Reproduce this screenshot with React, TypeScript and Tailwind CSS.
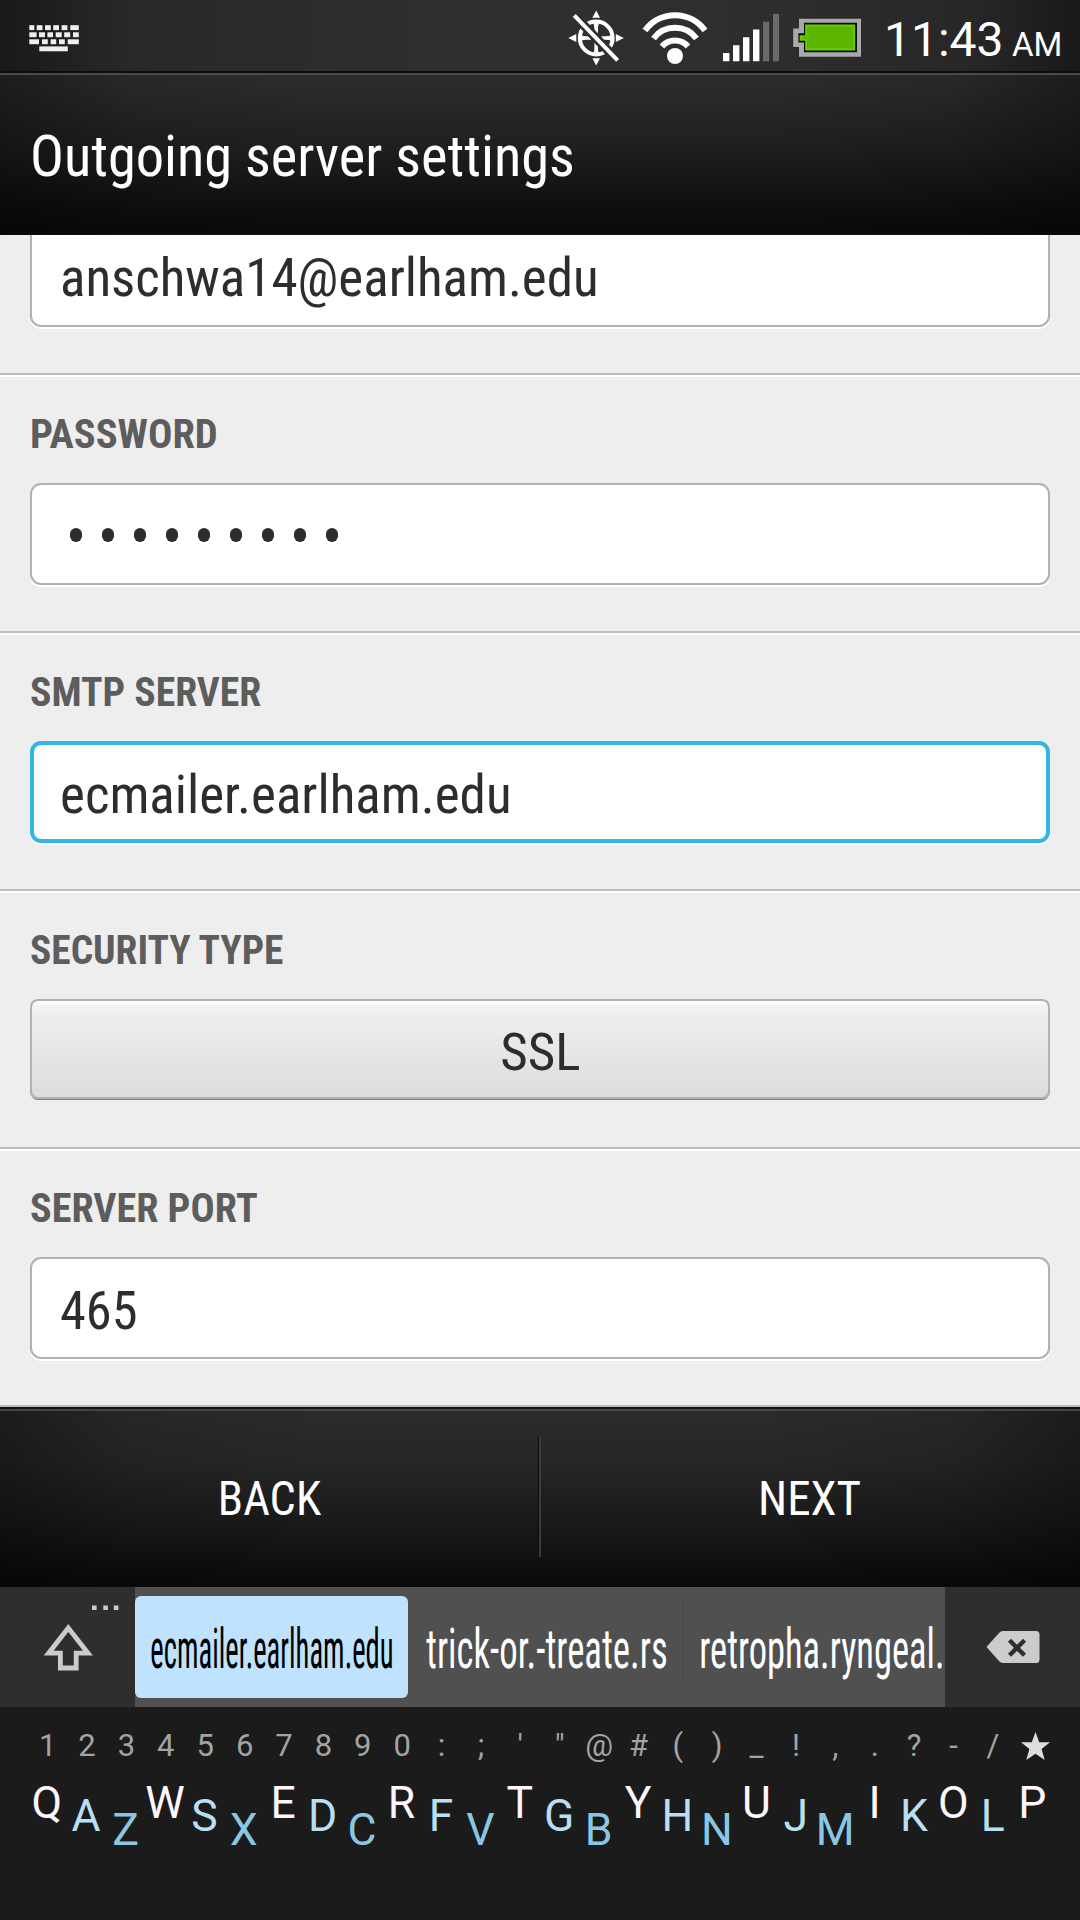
import React from "react";

const KEY_ROWS: [number, [number, number][]][] = [
  [25.2, [[29.3, 5], [36.7, 5.8], [45, 5.8], [53.2, 5.8], [61.6, 5.8], [70.3, 8.5]]],
  [32.3, [[29.3, 7.3], [39, 6], [47.4, 5.6], [55.7, 6], [64.2, 6], [73, 5.8]]],
  [39.3, [[29.3, 9.7], [42, 5.8], [50.6, 5.6], [59, 5.8], [67.7, 11.1]]],
  [46.4, [[39.3, 28.5]]],
];

function KeyboardIcon() {
  return (
    <svg className="block h-[30px] w-[54px]" viewBox="27 23 54 30" fill="#efefef">
      {KEY_ROWS.map(([y, keys]) =>
        keys.map(([x, w]) => <rect key={`${x}-${y}`} x={x} y={y} width={w} height={4.9} />)
      )}
    </svg>
  );
}

function LocationOffIcon() {
  return (
    <svg className="block h-[56px] w-[56px]" viewBox="568 10 56 56" fill="none">
      <circle cx="596.2" cy="38" r="16.4" stroke="#fff" strokeWidth="4" />
      <path d="M596.2 21v13M596.2 43v12M579.5 38h11.5M601.5 38h11.5" stroke="#fff" strokeWidth="3.6" />
      <path d="M592.8 55l3.4-10 3.4 10zM592.8 21l3.4 13 3.4-13zM579 34.6l11 3.4-11 3.4zM613.4 34.6l-11 3.4 11 3.4z" fill="#fff" />
      <path d="M596.2 10.5l3.8 7.3h-7.6zM596.2 65.5l3.8-7.3h-7.6zM568.3 38l8-4v8zM623.8 38l-8-4v8z" fill="#fff" />
      <path d="M577.5 18.8l40 41.5" stroke="#2e2e2e" strokeWidth="9.2" />
      <path d="M574.2 15.4l43.4 45" stroke="#fff" strokeWidth="4" />
    </svg>
  );
}

function WifiIcon() {
  return (
    <svg className="block h-[54px] w-[66px]" viewBox="642 11 66 54" fill="none" stroke="#fff" strokeWidth="6">
      <path d="M645 30.5A37 37 0 0 1 705 30.5" />
      <path d="M653.5 38.5A27 27 0 0 1 696.5 38.5" />
      <path d="M662 46.5A17 17 0 0 1 688 46.5" />
      <circle cx="675" cy="56" r="8" fill="#fff" stroke="none" />
    </svg>
  );
}

function SignalIcon() {
  return (
    <svg className="block h-[48px] w-[57px]" viewBox="723 14 57 48">
      <path fill="#fff" d="M723 53h6.4v8.3H723zM733 45.3h6.4v16H733zM743 37.3h6.4v24H743zM753 29.5h6.4v31.8H753z" />
      <path fill="#6b6b6b" d="M763 21.7h6.2v39.6H763zM773 14h6v47.3h-6z" />
    </svg>
  );
}

function BatteryIcon() {
  return (
    <svg className="block h-[40px] w-[70px]" viewBox="792 18 70 40">
      <path fill="#a9a9a9" d="M799 18.8h62v37.9h-62v-9.8h-5.8V28.6h5.8z" />
      <path fill="#0a0a0a" d="M804 22.8h53v29.4h-53v-9.6h-5.6v-9.4h5.6z" />
      <path fill="#66cf00" d="M805.2 24.4h50v26h-50v-9.6h-5.6v-5.6h5.6z" />
      <path fill="#5cb600" d="M807 26.4h46.4v22.2H807v-9.3h-4v-2.8h4z" />
    </svg>
  );
}

function StatusBar() {
  return (
    <div className="flex h-[73px] items-start justify-between border-b-2 border-[#0c0c0c] bg-[linear-gradient(90deg,#191919_0%,#282828_12%,#303030_45%,#2e2e2e_70%,#272727_90%,#191919_100%)]">
      <div className="pt-[23px] pl-[27px]">
        <KeyboardIcon />
      </div>
      <div className="flex items-start text-white">
        <div className="pt-[10px]"><LocationOffIcon /></div>
        <div className="ml-[18px] pt-[11px]"><WifiIcon /></div>
        <div className="ml-[15px] pt-[14px]"><SignalIcon /></div>
        <div className="ml-[12px] pt-[18px]"><BatteryIcon /></div>
        <div className="ml-[22px] flex w-[196px] items-baseline pt-[16px] font-['Roboto',sans-serif]">
          <span className="w-[128px] text-[48px] leading-[48px]">11:43</span>
          <span className="text-[33px] leading-[48px]">AM</span>
        </div>
      </div>
    </div>
  );
}

function TitleBar() {
  return (
    <header className="h-[162px] border-t-2 border-[#4b4b4b] bg-[linear-gradient(90deg,rgba(0,0,0,0.35)_0%,rgba(0,0,0,0.1)_12%,transparent_30%,transparent_70%,rgba(0,0,0,0.1)_88%,rgba(0,0,0,0.35)_100%),linear-gradient(180deg,#2d2d2d_0%,#1f1f1f_45%,#0e0e0e_85%,#0a0a0a_98%,#161213_100%)] pt-[53px] pl-[30px]">
      <h1 className="origin-left scale-x-[0.99] text-[57px] leading-[57px] text-white">Outgoing server settings</h1>
    </header>
  );
}

function Label({ children, scale }: { children: string; scale: string }) {
  return (
    <div className={`origin-left text-[40px] leading-[40px] font-bold text-[#5d5d5d] ${scale}`}>{children}</div>
  );
}

function Row({ label, scale, children }: { label: string; scale: string; children: React.ReactNode }) {
  return (
    <section className="h-[258px] border-t-2 border-[#bdbdbd] px-[30px] shadow-[inset_0_2px_0_#fff]">
      <div className="h-[108px] pt-[40px]">
        <Label scale={scale}>{label}</Label>
      </div>
      {children}
    </section>
  );
}

const fieldBase =
  "flex h-[102px] items-center rounded-[11px] bg-white pt-[5px] text-[54px] leading-[54px] text-[#2c2d2f] shadow-[0_2px_0_#fff]";

function Form() {
  return (
    <main className="h-[1172px] overflow-hidden bg-[#eeeeee]">
      <div className="h-[138px] px-[30px]">
        <div className="flex h-[92px] rounded-b-[11px] border-2 border-t-0 border-[#b1b1b1] bg-white pt-[16px] pl-[28px] text-[54px] leading-[54px] text-[#2c2d2f] shadow-[0_2px_0_#fff]">
          <span className="origin-left scale-x-[0.982]">anschwa14@earlham.edu</span>
        </div>
      </div>
      <Row label="PASSWORD" scale="scale-x-[1.014]">
        <div className="flex h-[102px] items-center gap-[20px] rounded-[11px] border-2 border-[#b1b1b1] bg-white pt-[2px] pl-[38px] shadow-[0_2px_0_#fff]">
          {Array.from({ length: 9 }, (_, i) => (
            <span key={i} className="h-[14px] w-[12px] rounded-full bg-[#2c2d2f]" />
          ))}
        </div>
      </Row>
      <Row label="SMTP SERVER" scale="scale-x-[0.993]">
        <div className={`${fieldBase} border-4 border-[#33b5e5] pl-[26px]`}>
          <span className="origin-left scale-x-[0.983]">ecmailer.earlham.edu</span>
        </div>
      </Row>
      <Row label="SECURITY TYPE" scale="scale-x-[0.986]">
        <button className="flex h-[101px] w-full items-center justify-center rounded-[8px] border-2 border-b border-[#b1b1b1] border-b-[#858585] bg-[linear-gradient(180deg,#ffffff_0%,#f2f2f2_5%,#eeeeee_15%,#dcdcdc_100%)] pt-[5px] text-[52px] leading-[52px] text-[#2c2d2f] shadow-[inset_0_-2px_0_#b1b1b1]">
          <span className="scale-x-[1.02]">SSL</span>
        </button>
      </Row>
      <Row label="SERVER PORT" scale="scale-x-[1.004]">
        <div className={`${fieldBase} border-2 border-[#b1b1b1] pl-[28px]`}>
          <span className="origin-left scale-x-[0.97]">465</span>
        </div>
      </Row>
      <div className="h-[2px] bg-[#bdbdbd]" />
    </main>
  );
}

function Footer() {
  return (
    <nav className="flex h-[180px] border-t-2 border-[#131313] bg-[linear-gradient(90deg,rgba(0,0,0,0.35)_0%,rgba(0,0,0,0.1)_12%,transparent_30%,transparent_70%,rgba(0,0,0,0.1)_88%,rgba(0,0,0,0.35)_100%),linear-gradient(180deg,#2b2b2b_0%,#262626_30%,#171717_70%,#090909_100%)] pt-[28px] text-[48px] leading-[96px] text-white shadow-[inset_0_2px_0_#454545]">
      <button className="h-[120px] flex-1 border-r border-[#0c0c0c] pt-[4px] pl-px">
        <span className="inline-block scale-x-[0.965]">BACK</span>
      </button>
      <button className="h-[120px] flex-1 border-l-2 border-[#3c3c3c] pt-[4px] pr-[2px]">
        <span className="inline-block scale-x-[0.98]">NEXT</span>
      </button>
    </nav>
  );
}

function Suggestions() {
  return (
    <div className="flex h-[120px] bg-[#2e2e2e] text-[55px] leading-[55px] text-white">
      <div className="flex w-[135px] shrink-0">
        <svg className="block h-[120px] w-[135px]" viewBox="0 1587 135 120">
          <path d="M68.3 1628L88 1653.2H76.2V1668H60.4V1653.2H48.6Z" fill="none" stroke="#cbcbcb" strokeWidth="4.8" />
          <path d="M92 1605.5h4.6v4.6H92zM103.3 1605.5h4.6v4.6h-4.6zM113.8 1605.5h4.6v4.6h-4.6z" fill="#cbcbcb" />
        </svg>
      </div>
      <div className="flex w-[810px] shrink-0 overflow-hidden bg-[#505050] pt-[9px]">
        <div className="flex h-[102px] w-[273px] shrink-0 justify-center rounded-[6px] bg-[#bfe3ff] pt-[26px] text-black">
          <span className="shrink-0 scale-x-[0.52]">ecmailer.earlham.edu</span>
        </div>
        <div className="flex h-[84px] w-[276px] shrink-0 justify-center self-start border-r-2 border-[#4b4b4b] pt-[26px] pl-[4px]">
          <span className="shrink-0 scale-x-[0.668]">trick-or.-treate.rs</span>
        </div>
        <div className="flex h-[102px] w-[276px] shrink-0 justify-center pt-[26px]">
          <span className="shrink-0 scale-x-[0.663]">retropha.ryngeal.</span>
        </div>
      </div>
      <div className="flex w-[135px] shrink-0">
        <svg className="block h-[120px] w-[135px]" viewBox="945 1587 135 120">
          <path d="M1003 1631h33a3.5 3.5 0 0 1 3.5 3.5v25a3.5 3.5 0 0 1-3.5 3.5h-33a5 5 0 0 1-4-2l-12.5-14 12.5-14a5 5 0 0 1 4-2z" fill="#cccccc" />
          <path d="M1009.5 1640.3l15 15M1024.5 1640.3l-15 15" stroke="#2e2e2e" strokeWidth="4.4" />
        </svg>
      </div>
    </div>
  );
}

const SYMBOLS = ["1", "2", "3", "4", "5", "6", "7", "8", "9", "0", ":", ";", "'", '"', "@", "#", "(", ")", "_", "!", ",", ".", "?", "-", "/"];
const LETTERS = "QAZWSXEDCRFVTGBYHNUJMIKOLP".split("");
const MIDDLE = "ASDFGHJKL";
const BOTTOM = "ZXCVBNM";

function letterClass(letter: string) {
  if (MIDDLE.includes(letter)) return "pt-[13px] text-[#b9dff2]";
  if (BOTTOM.includes(letter)) return "pt-[27px] text-[#8ac7e4]";
  return "text-[#fdf6fa]";
}

function Keyboard() {
  return (
    <div className="h-[213px] bg-[#1b1b1b] px-[28px] pt-[23px] font-['Roboto',sans-serif]">
      <div className="grid h-[51px] grid-cols-[repeat(26,minmax(0,1fr))] text-center text-[31px] leading-[31px] text-[#a3a3a3]">
        {SYMBOLS.map((s) => (
          <span key={s}>{s}</span>
        ))}
        <svg className="mt-[2px] ml-[8px] block h-[29px] w-[29px]" viewBox="0 0 28 28" fill="#dddddd">
          <path d="M14 0l3.6 9.8h10.4l-8.1 6.6 3 10.6-8.9-6.1-8.9 6.1 3-10.6L0 9.8h10.4z" />
        </svg>
      </div>
      <div className="-ml-px grid grid-cols-[repeat(26,minmax(0,1fr))] text-[44.5px] leading-[44px]">
        {LETTERS.map((l) => (
          <span key={l} className={`flex justify-center ${letterClass(l)}`}>{l}</span>
        ))}
      </div>
    </div>
  );
}

export default function App() {
  return (
    <div className="flex h-[1920px] w-[1080px] flex-col overflow-hidden bg-black font-['Roboto_Condensed',Roboto,sans-serif]">
      <StatusBar />
      <TitleBar />
      <Form />
      <Footer />
      <Suggestions />
      <Keyboard />
    </div>
  );
}
